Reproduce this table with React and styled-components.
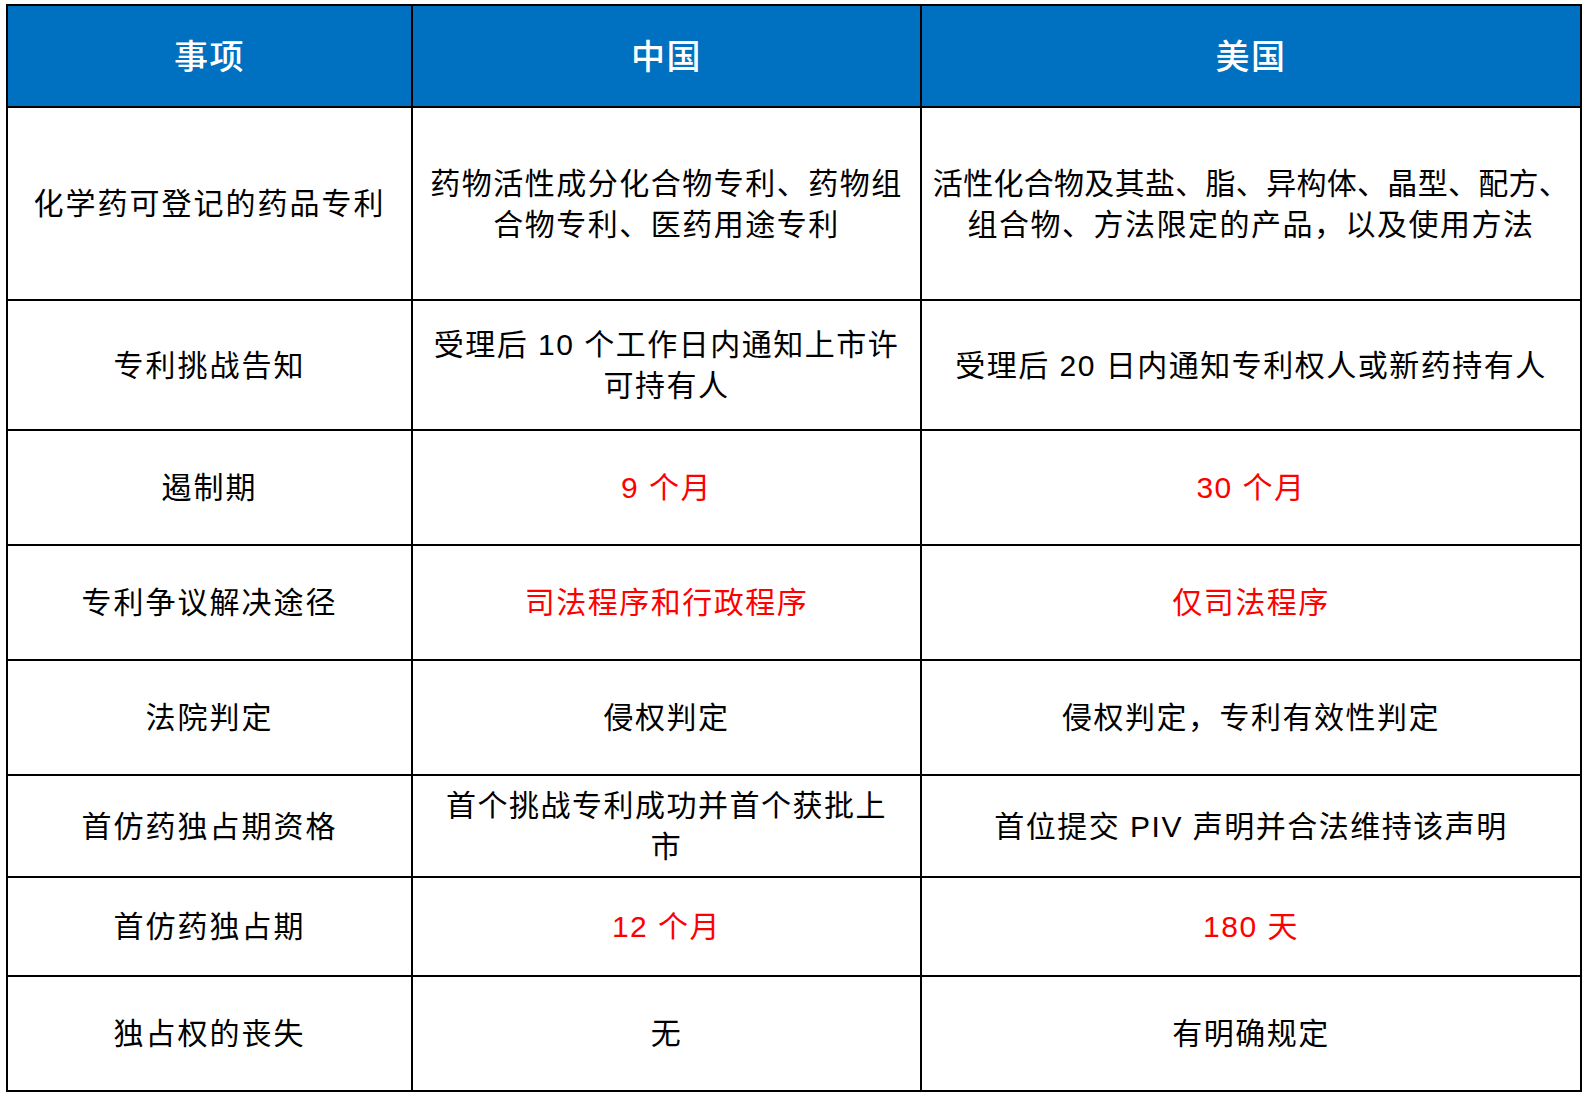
import React from "react";
import styled, {createGlobalStyle} from "styled-components";

const GlobalStyle = createGlobalStyle`
  html, body {
    margin: 0;
    padding: 0;
    background: #ffffff;
  }
  body {
    padding: 4px 0 0 6px;
    font-family: "Liberation Sans", "Noto Sans CJK SC", sans-serif;
  }
`;

const Table = styled.div`
  display: grid;
  grid-template-columns: 403px 507px 658px;
  grid-template-rows: 100px 191px 128px 113px 113px 113px 100px 97px 113px;
  gap: 2px;
  padding: 2px;
  width: max-content;
  background: #000000;
`;

const HeadCell = styled.div`
  display: flex;
  align-items: center;
  justify-content: center;
  padding-bottom: 4px;
  background: #0070c0;
  color: #ffffff;
  font-size: 34px;
  letter-spacing: 1.5px;
  font-weight: 500;
`;

const Cell = styled.div`
  display: flex;
  align-items: center;
  justify-content: center;
  text-align: center;
  background: #ffffff;
  color: ${(p) => (p.$red ? "#ff0000" : "#000000")};
  font-size: 30px;
  line-height: 41px;
  letter-spacing: ${(p) => (p.$wide ? "2px" : "1.5px")};
  white-space: nowrap;
`;

const Line = styled.span`
  letter-spacing: ${(p) => (p.$tight ? "0.3px" : "inherit")};
`;

const rows = [
  {
    item: "化学药可登记的药品专利",
    cn: ["药物活性成分化合物专利、药物组", "合物专利、医药用途专利"],
    us: ["活性化合物及其盐、脂、异构体、晶型、配方、", "组合物、方法限定的产品，以及使用方法"],
    usTight: true,
  },
  {
    item: "专利挑战告知",
    cn: ["受理后 10 个工作日内通知上市许", "可持有人"],
    us: ["受理后 20 日内通知专利权人或新药持有人"],
  },
  {item: "遏制期", cn: ["9 个月"], us: ["30 个月"], red: true},
  {item: "专利争议解决途径", cn: ["司法程序和行政程序"], us: ["仅司法程序"], red: true},
  {item: "法院判定", cn: ["侵权判定"], us: ["侵权判定，专利有效性判定"]},
  {
    item: "首仿药独占期资格",
    cn: ["首个挑战专利成功并首个获批上", "市"],
    us: ["首位提交 PIV 声明并合法维持该声明"],
  },
  {item: "首仿药独占期", cn: ["12 个月"], us: ["180 天"], red: true},
  {item: "独占权的丧失", cn: ["无"], us: ["有明确规定"]},
];

const Lines = ({lines, tight}) =>
  lines.map((l, i) => (
    <React.Fragment key={i}>
      {i > 0 && <br />}
      <Line $tight={tight && i === 0}>{l}</Line>
    </React.Fragment>
  ));

export default function App() {
  return (
    <>
      <GlobalStyle />
      <Table>
        <HeadCell>事项</HeadCell>
        <HeadCell>中国</HeadCell>
        <HeadCell>美国</HeadCell>
        {rows.map((r) => (
          <React.Fragment key={r.item}>
            <Cell $wide>{r.item}</Cell>
            <Cell $red={r.red}>
              <div>
                <Lines lines={r.cn} />
              </div>
            </Cell>
            <Cell $red={r.red}>
              <div>
                <Lines lines={r.us} tight={r.usTight} />
              </div>
            </Cell>
          </React.Fragment>
        ))}
      </Table>
    </>
  );
}
